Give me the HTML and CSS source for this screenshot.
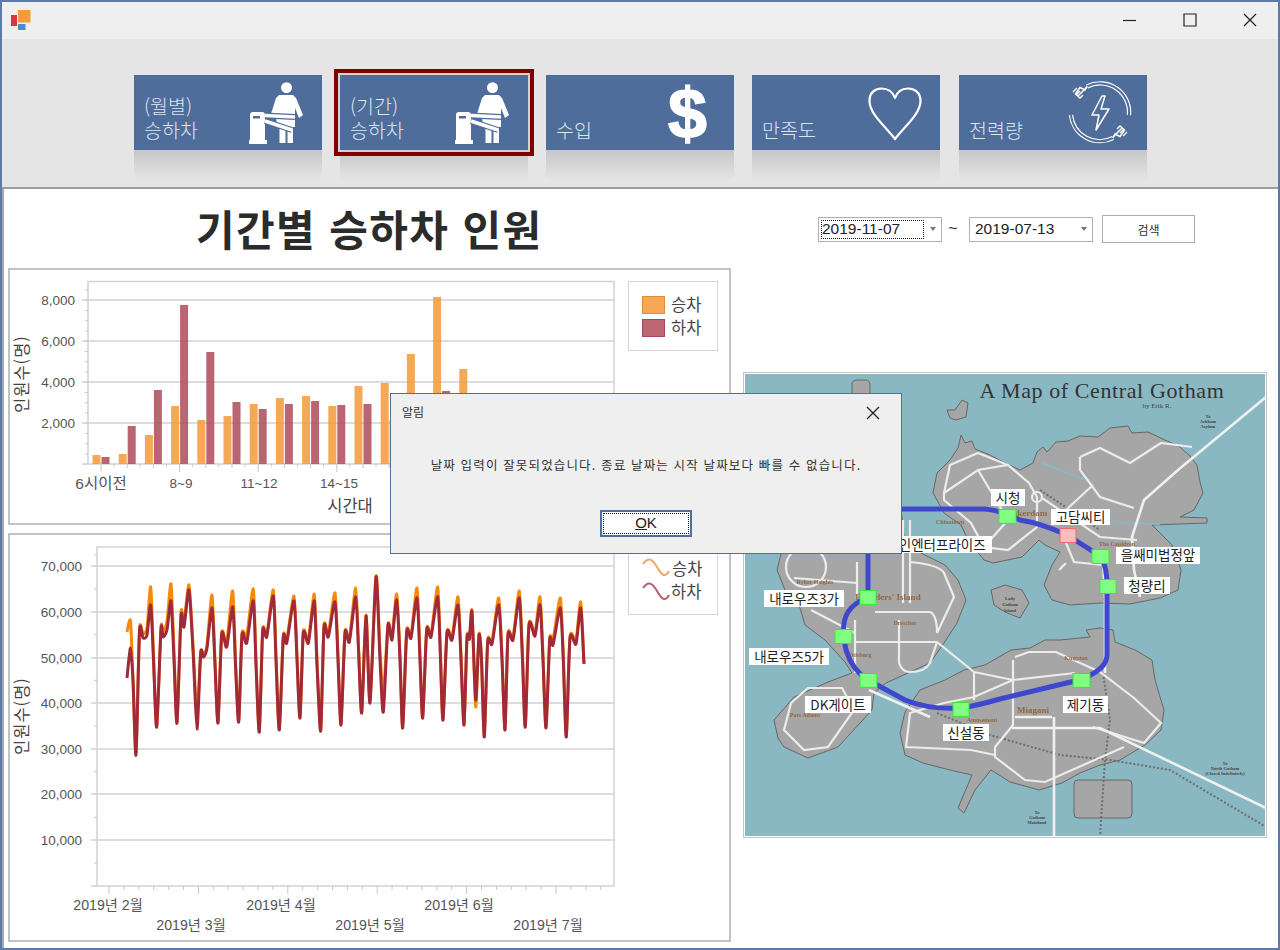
FILE: index.html
```html
<!DOCTYPE html>
<html lang="ko">
<head>
    <meta charset="UTF-8">
    <title>기간별 승하차 인원</title>
    <link rel="stylesheet" href="styles.css">
</head>
<body>
<div class="window">
    <div class="titlebar">
        <svg class="app-logo" viewBox="0 0 24 24">
            <rect x="1" y="7" width="6" height="11" fill="#d8344a"/>
            <rect x="8" y="2" width="12.5" height="12.5" fill="#f59a3e"/>
            <rect x="8" y="16" width="7.5" height="6" fill="#4a8ccb"/>
        </svg>
        <div class="win-controls">
            <svg viewBox="0 0 14 14"><path d="M0 7.5H13"/></svg>
            <svg viewBox="0 0 14 14"><path d="M1 1H13V13H1Z"/></svg>
            <svg viewBox="0 0 14 14"><path d="M1 1L13 13M13 1L1 13"/></svg>
        </div>
    </div>

    <svg class="defs">
        <defs>
            <symbol id="gate" viewBox="0 0 70 66">
                <circle cx="48.5" cy="7.7" r="5.5" fill="#fff"/>
                <path fill="#fff" d="M41 15H55L58 18L65 35L61 38L57 28L57 47H39L38 37H32L38 18Z"/>
                <rect x="41.500" y="46" width="6" height="17" fill="#fff"/>
                <rect x="49.500" y="46" width="5.500" height="17" fill="#fff"/>
                <path fill="#fff" d="M12 35Q12 32 15 32H24Q27 32 27 35V60H29V64H11V60H12Z"/>
                <rect x="15" y="36" width="7" height="2.500" fill="#4e6d9b"/>
                <path d="M27 35.500L57 37" stroke="#4e6d9b" stroke-width="6" fill="none"/>
                <path d="M27 41L54 50" stroke="#4e6d9b" stroke-width="6" fill="none"/>
                <path d="M27 35.500L57 37" stroke="#fff" stroke-width="3.500" fill="none"/>
                <path d="M27 41L54 50" stroke="#fff" stroke-width="3.500" fill="none"/>
            </symbol>
        </defs>
    </svg>

    <div class="ribbon">
        <div class="tile-wrap">
            <div class="tile">
                <span class="tile-label">(월별)<br>승하차</span>
                <svg class="tile-icon"><use href="#gate"/></svg>
            </div>
            <div class="tile-shine"></div>
        </div>
        <div class="tile-wrap">
            <div class="tile active">
                <span class="tile-label">(기간)<br>승하차</span>
                <svg class="tile-icon"><use href="#gate"/></svg>
            </div>
            <div class="tile-shine"></div>
        </div>
        <div class="tile-wrap">
            <div class="tile">
                <span class="tile-label">수입</span>
                <span class="tile-dollar">$</span>
            </div>
            <div class="tile-shine"></div>
        </div>
        <div class="tile-wrap">
            <div class="tile">
                <span class="tile-label">만족도</span>
                <svg class="tile-icon" viewBox="0 0 70 66">
                    <path d="M39 59C30 47 13.500 34 13.500 21C13.500 12 19.500 8.500 25.500 8.500C31.500 8.500 37 12 39 18C41 12 46 8.500 52 8.500C58 8.500 64.500 12 64.500 21C64.500 34 48 47 39 59Z" fill="none" stroke="#fff" stroke-width="2.200" stroke-linejoin="round"/>
                </svg>
            </div>
            <div class="tile-shine"></div>
        </div>
        <div class="tile-wrap last">
            <div class="tile">
                <span class="tile-label">전력량</span>
                <svg class="tile-icon" viewBox="0 0 70 66">
                    <g fill="none">
                        <path d="M24 6.500A29 29 0 0 1 66 35" stroke="#fff" stroke-width="4.400"/>
                        <path d="M24 6.500A29 29 0 0 1 66 35" stroke="#4e6d9b" stroke-width="2"/>
                        <path d="M8 35A29 29 0 0 0 50 58" stroke="#fff" stroke-width="4.400"/>
                        <path d="M8 35A29 29 0 0 0 50 58" stroke="#4e6d9b" stroke-width="2"/>
                        <path d="M39 16L29 35H36L33 50L46 29H38L42 16Z" stroke="#fff" stroke-width="1.500" stroke-linejoin="round"/>
                        <g stroke="#fff" stroke-width="1.500">
                            <path d="M24 6L22 10L17 7.500L12.500 14L17 18L20 15"/>
                            <path d="M24 7L15 16M14 8L10 12M17 11L13 15"/>
                            <path d="M50 58L52 54L57 56.500L61.500 50L57 46L54 49"/>
                            <path d="M50 57L59 48M60 56L64 52M57 53L61 49"/>
                        </g>
                    </g>
                </svg>
            </div>
            <div class="tile-shine"></div>
        </div>
    </div>

    <div class="content">
        <div class="left-col">
            <h1 class="page-title">기간별 승하차 인원</h1>

            <div class="chart-panel bar-panel">
                <svg viewBox="8 268 723 257" class="chart">
                    <g id="bar-grid"></g>
                    <g id="bar-series"></g>
                    <text class="tick-label" text-anchor="end" x="75" y="305">8,000</text>
                    <text class="tick-label" text-anchor="end" x="75" y="346">6,000</text>
                    <text class="tick-label" text-anchor="end" x="75" y="387">4,000</text>
                    <text class="tick-label" text-anchor="end" x="75" y="428">2,000</text>
                    <text class="tick-label wide" text-anchor="middle" x="101" y="489">6시이전</text>
                    <text class="tick-label" text-anchor="middle" x="181" y="488">8~9</text>
                    <text class="tick-label" text-anchor="middle" x="259" y="488">11~12</text>
                    <text class="tick-label" text-anchor="middle" x="339" y="488">14~15</text>
                    <text class="axis-title" text-anchor="middle" x="350" y="512">시간대</text>
                    <text class="axis-title stretched" text-anchor="middle" transform="translate(28 374) rotate(-90)">인원수(명)</text>
                    <rect class="legend-box" x="628.500" y="281.500" width="89" height="69"/>
                    <rect x="642.500" y="296.500" width="22" height="17" fill="#f6a857" stroke="#e08a35"/>
                    <rect x="642.500" y="319.500" width="22" height="17" fill="#bd6570" stroke="#a24a58"/>
                    <text class="axis-title" x="671" y="311">승차</text>
                    <text class="axis-title" x="671" y="334">하차</text>
                </svg>
            </div>

            <div class="chart-panel line-panel">
                <svg viewBox="8 533 723 409" class="chart">
                    <g id="line-grid"></g>
                    <g id="line-series"></g>
                    <text class="tick-label" text-anchor="end" x="82" y="571">70,000</text>
                    <text class="tick-label" text-anchor="end" x="82" y="617">60,000</text>
                    <text class="tick-label" text-anchor="end" x="82" y="663">50,000</text>
                    <text class="tick-label" text-anchor="end" x="82" y="708">40,000</text>
                    <text class="tick-label" text-anchor="end" x="82" y="754">30,000</text>
                    <text class="tick-label" text-anchor="end" x="82" y="799">20,000</text>
                    <text class="tick-label" text-anchor="end" x="82" y="845">10,000</text>
                    <text class="tick-label month" text-anchor="middle" x="108" y="910">2019년 2월</text>
                    <text class="tick-label month" text-anchor="middle" x="191" y="930">2019년 3월</text>
                    <text class="tick-label month" text-anchor="middle" x="281" y="910">2019년 4월</text>
                    <text class="tick-label month" text-anchor="middle" x="370" y="930">2019년 5월</text>
                    <text class="tick-label month" text-anchor="middle" x="459" y="910">2019년 6월</text>
                    <text class="tick-label month" text-anchor="middle" x="548" y="930">2019년 7월</text>
                    <text class="axis-title stretched" text-anchor="middle" transform="translate(28 716) rotate(-90)">인원수(명)</text>
                    <rect class="legend-box" x="628.500" y="548.500" width="89" height="66"/>
                    <path d="M643 564C649 556 653 560 657 567C661 574 665 579 669 571" fill="none" stroke="#eea660" stroke-width="2"/>
                    <path d="M643 588C649 580 653 584 657 591C661 598 665 603 669 595" fill="none" stroke="#b4606c" stroke-width="2"/>
                    <text class="axis-title" x="672" y="575">승차</text>
                    <text class="axis-title" x="671" y="598">하차</text>
                </svg>
            </div>
        </div>

        <div class="right-col">
            <div class="search-bar">
                <div class="date-box"><span class="date-text focused">2019-11-07</span><i class="caret"></i></div>
                <span class="tilde">~</span>
                <div class="date-box"><span class="date-text">2019-07-13</span><i class="caret"></i></div>
                <button class="search-btn">검색</button>
            </div>

            <div class="map-frame">
                <svg class="map" viewBox="745 374 520 462">
                    <defs>
                        <filter id="soft" x="-5%" y="-5%" width="110%" height="110%"><feGaussianBlur stdDeviation="0.45"/></filter>
                    </defs>
                    <rect x="745" y="374" width="520" height="462" fill="#8ab8c2"/>
                    <g filter="url(#soft)">
                        <g class="land">
                            <path d="M961 435L965 443L972 441L975 449L990 455L1003 462L1020 470L1033 463L1037 452L1043 447L1047 452L1056 442L1068 441L1080 436L1098 437L1110 428L1128 426L1132 433L1148 432L1165 440L1180 447L1190 456L1197 465L1200 482L1203 493L1194 510L1180 517L1207 518V523L1152 525L1172 545L1181 570L1178 590L1160 598L1130 604L1100 603L1070 605L1052 600L1044 585L1052 565L1060 552L1045 545L1039 540L1022 557L993 563L984 560L968 540L961 525L944 513L933 493L937 473L950 460L958 448Z"/>
                            <path d="M781 554L777 570L785 590L800 608L805 625L825 640L845 662L852 673L828 682L794 697L774 720L778 738L784 747L808 758L838 747L872 710L874 693L886 683L930 663L944 643L957 623L966 600L958 580L945 565L925 555L905 545L900 500L870 500L790 510Z"/>
                            <path d="M900 733L905 712L920 690L945 680L964 670L985 665L1011 650L1030 648L1045 640L1060 640L1090 637L1086 630L1100 628L1113 630L1115 642L1135 650L1152 660L1155 680L1164 710L1161 730L1145 745L1120 760L1100 765L1080 773L1062 783L1039 790L1010 782L991 770L975 790L964 813L958 808L972 775L950 770L923 763L905 755Z"/>
                            <rect x="1074" y="780" width="58" height="38" rx="4"/>
                            <path d="M991 590L1005 585L1022 590L1029 603L1020 618L1005 612L994 605Z"/>
                            <path d="M947 410L955 410L962 400L968 403L966 417L956 420L950 418Z"/>
                            <path d="M852 384Q852 380 858 380H866Q870 380 870 386V420H852Z"/>
                        </g>
                        <g class="water-line">
                            <path d="M1042 463L1093 483"/>
                            <path d="M1110 522L1160 524"/>
                        </g>
                        <g class="rail">
                            <path d="M937 713L990 735L1060 755L1110 760L1170 770L1266 827"/>
                            <path d="M1103 673L1110 720L1105 760L1100 836"/>
                            <path d="M1040 490L1100 530"/>
                        </g>
                        <g class="road">
                            <path d="M808 688H842L854 710L828 747L804 750L784 730L791 703Z"/>
                            <circle cx="806" cy="567" r="20"/>
                            <path d="M794 578L857 583M857 562V603M903 520V603M910 520V603M899 620V663Q902 672 910 672Q925 672 930 663L937 642M855 642H937M875 612H930Q937 615 937 633M937 642L974 672M855 620V673M811 610L855 633M910 562Q940 565 944 573L954 597L937 633"/>
                            <path d="M944 493L978 470L1008 465L1029 483L1037 497V527L1008 550L984 547L971 523L944 500ZM944 493L950 465L978 453L1008 465M978 470L1008 520L984 547"/>
                            <circle cx="1037" cy="497" r="5"/>
                            <path d="M1080 457L1100 448L1130 463L1161 443L1192 447M1080 457V470L1100 497L1134 508"/>
                            <path class="bridge" d="M1266 397L1178 470L1144 500L1132 537L1134 570L1140 597"/>
                            <path d="M1042 498L1100 537L1137 540M1066 510L1093 485M1066 543L1074 562L1103 565L1105 600M1059 570L1066 563"/>
                            <path d="M1015 657L1029 652H1056L1100 672L1134 698L1161 723L1144 743L1093 727M1013 660V725L995 747V757L1025 780L1045 782L1124 747M910 713L906 747L971 750L995 755M906 747L910 713L944 703M974 672V700M974 672L1013 680L1075 673M944 703L974 697L1013 680"/>
                            <path class="bridge" d="M869 690L930 717M1270 810L1100 728H1012M1054 717V836M1015 717H1052M1105 600V673"/>
                        </g>
                        <g class="place">
                            <text x="950" y="524">Chinatown</text>
                            <text x="815" y="584">Ryker Heights</text>
                            <text x="888" y="600" class="big">Founders' Island</text>
                            <text x="905" y="625">Drescher</text>
                            <text x="860" y="657">Otisburg</text>
                            <text x="805" y="717">Port Adams</text>
                            <text x="1076" y="660">Kingston</text>
                            <text x="1033" y="713" class="big">Miagani</text>
                            <text x="982" y="722">Amusement</text>
                            <text x="1117" y="546">The Cauldron</text>
                            <text x="1027" y="516" class="big">Bakerdam</text>
                        </g>
                    </g>
                    <g class="map-small">
                        <text x="1157" y="408">by Erik R.</text>
                        <text class="tiny" x="1208" y="418">To</text>
                        <text class="tiny" x="1208" y="423">Arkham</text>
                        <text class="tiny" x="1208" y="428">Asylum</text>
                        <text class="tiny" x="1225" y="765">To</text>
                        <text class="tiny" x="1225" y="770">North Gotham</text>
                        <text class="tiny" x="1225" y="775">(Closed Indefinitely)</text>
                        <text class="tiny" x="1037" y="814">To</text>
                        <text class="tiny" x="1037" y="819">Gotham</text>
                        <text class="tiny" x="1037" y="824">Mainland</text>
                        <text class="tiny" x="1010" y="600">Lady</text>
                        <text class="tiny" x="1010" y="606">Gotham</text>
                        <text class="tiny" x="1010" y="612">Island</text>
                    </g>
                    <text class="map-title" x="1102" y="398">A Map of Central Gotham</text>

                    <path class="metro" d="M868 597V530Q868 509 890 509H985Q1000 510 1020 520Q1040 523 1067 535L1100 556Q1107 565 1107 586V655Q1107 670 1079 680L1000 699Q975 706 961 708Q930 710 905 700L868 680Q852 670 846 650Q840 625 848 612Q855 602 868 597"/>

                    <g class="station">
                        <rect x="999" y="509.500" width="17" height="14"/>
                        <rect x="1092" y="549.500" width="17" height="14"/>
                        <rect x="1100" y="579.500" width="16" height="14"/>
                        <rect x="860" y="590.500" width="16" height="14"/>
                        <rect x="835" y="629.500" width="17" height="14"/>
                        <rect x="860" y="673.500" width="17" height="14"/>
                        <rect x="953" y="702.500" width="16" height="14"/>
                        <rect x="1073" y="673.500" width="17" height="14"/>
                    </g>
                    <rect class="station-now" x="1060" y="528.500" width="16" height="14"/>

                    <g class="stop-label">
                        <rect x="991" y="489" width="34" height="17"/><text x="1008" y="503">시청</text>
                        <rect x="1051" y="509" width="59" height="16"/><text x="1080.500" y="522">고담씨티</text>
                        <rect x="880" y="536" width="112" height="17"/><text x="936" y="550">웨인엔터프라이즈</text>
                        <rect x="1116" y="547" width="84" height="17"/><text x="1158" y="560">을쌔미법정앞</text>
                        <rect x="1124" y="577" width="46" height="17"/><text x="1147" y="591">청량리</text>
                        <rect x="764" y="590" width="80" height="17"/><text x="804" y="604">내로우즈3가</text>
                        <rect x="749" y="648" width="80" height="17"/><text x="789" y="662">내로우즈5가</text>
                        <rect x="805" y="696" width="66" height="17"/><text x="838" y="710">DK게이트</text>
                        <rect x="1063" y="696" width="45" height="17"/><text x="1085.500" y="710">제기동</text>
                        <rect x="943" y="724" width="46" height="17"/><text x="966" y="738">신설동</text>
                    </g>
                </svg>
            </div>
        </div>
    </div>

    <div class="dialog">
        <div class="dialog-head">
            <span>알림</span>
            <svg viewBox="0 0 14 14"><path d="M1 1L13 13M13 1L1 13"/></svg>
        </div>
        <p class="dialog-msg">날짜 입력이 잘못되었습니다. 종료 날짜는 시작 날짜보다 빠를 수 없습니다.</p>
        <button class="dialog-ok"><span><u>O</u>K</span></button>
    </div>
</div>
<script src="chart.js"></script>
</body>
</html>
```

FILE: styles.css
```css
* {
    box-sizing: border-box;
}
body {
    margin: 0;
    font-family: "Noto Sans CJK KR", "Liberation Sans", sans-serif;
    color: #333;
    background-color: #fff;
}
.window {
    position: relative;
    width: 1280px;
    height: 950px;
    border: 2px solid #5d7ba8;
    overflow: hidden;
    background-color: #fff;
}
.defs {
    position: absolute;
    width: 0;
    height: 0;
}

/* title bar */
.titlebar {
    height: 37px;
    display: flex;
    justify-content: space-between;
    align-items: center;
    background-color: #efefef;
}
.app-logo {
    width: 24px;
    height: 24px;
    margin-left: 8px;
    margin-top: -2px;
}
.win-controls {
    display: flex;
    gap: 46px;
    margin-right: 21px;
    margin-top: -1px;
}
.win-controls svg {
    width: 14px;
    height: 14px;
    fill: none;
    stroke: #222;
    stroke-width: 1.2;
}

/* ribbon */
.ribbon {
    height: 150px;
    padding: 36px 0 0 132px;
    display: flex;
    gap: 18px;
    background-color: #e5e5e5;
    border-bottom: 2px solid #9c9c9c;
}
.tile-wrap {
    width: 188px;
}
.tile-wrap.last {
    margin-left: 1px;
}
.tile {
    position: relative;
    z-index: 1;
    height: 75px;
    display: flex;
    justify-content: space-between;
    background-color: #4e6d9b;
    color: #dde5ef;
}
.tile.active {
    box-shadow: 0 0 0 2px #d2d2d2, 0 0 0 6px #800000;
}
.tile-shine {
    height: 30px;
    background: linear-gradient(#c6c6c6, #e5e5e5);
}
.tile-label {
    align-self: flex-end;
    padding: 0 0 8px 10px;
    font-size: 19.5px;
    font-weight: 300;
    line-height: 24px;
}
.tile-icon {
    width: 70px;
    height: 66px;
    margin: 5px 14px 0 0;
}
.tile-dollar {
    margin-right: 27px;
    font-family: "Liberation Sans", sans-serif;
    font-weight: 700;
    font-size: 70px;
    line-height: 79px;
    color: #fff;
    -webkit-text-stroke: 1.5px #fff;
}

/* main area */
.content {
    height: 759px;
    padding-left: 4px;
    display: flex;
    gap: 12px;
    border-left: 2px solid #a8a8a8;
}
.left-col {
    width: 723px;
}
.page-title {
    height: 79px;
    margin: 0;
    padding-left: 188px;
    font-size: 42px;
    line-height: 78px;
    font-weight: 700;
    letter-spacing: 1.4px;
    color: #2b2b2b;
}
.chart-panel {
    border: 2px solid #c2c2c2;
    overflow: hidden;
}
.bar-panel {
    height: 257px;
    margin-bottom: 8px;
}
.line-panel {
    height: 409px;
}
.chart {
    display: block;
    width: 723px;
    margin: -2px;
}
.bar-panel .chart {
    height: 257px;
}
.line-panel .chart {
    height: 409px;
}
.tick-label {
    font-family: "Liberation Sans", "Noto Sans CJK KR", sans-serif;
    font-size: 13.5px;
    fill: #555;
}
.tick-label.wide {
    font-size: 15.5px;
}
.tick-label.month {
    font-size: 14.2px;
}
.axis-title {
    font-size: 16.5px;
    fill: #444;
}
.axis-title.stretched {
    letter-spacing: 1px;
}
.legend-box {
    fill: #fff;
    stroke: #d6d6d6;
}
.grid-line {
    stroke: #d2d2d2;
    stroke-width: 1.5;
}
.tick-line {
    stroke: #c8c8c8;
    stroke-width: 1;
}
.bar-up {
    fill: #f39a3a;
    fill-opacity: 0.85;
}
.bar-down {
    fill: #ae4a58;
    fill-opacity: 0.85;
}
.line-up {
    fill: none;
    stroke: #f58a0a;
    stroke-width: 3;
    stroke-linejoin: round;
}
.line-down {
    fill: none;
    stroke: #a22a38;
    stroke-width: 3;
    stroke-linejoin: round;
}

/* date search */
.search-bar {
    height: 28px;
    margin-top: 26px;
    padding-left: 75px;
    display: flex;
    align-items: center;
}
.date-box {
    width: 124px;
    height: 25px;
    padding: 2px;
    display: flex;
    align-items: center;
    border: 1px solid #b0b0b0;
    background-color: #fff;
}
.date-text {
    width: 103px;
    height: 19px;
    padding-left: 1px;
    font-family: "Liberation Sans", sans-serif;
    font-size: 15.5px;
    line-height: 18px;
    color: #222;
}
.date-box:nth-child(3) .date-text {
    padding-left: 3px;
}
.date-text.focused {
    outline: 1px dotted #222;
    outline-offset: -1px;
}
.caret {
    margin-left: 6px;
    border-top: 4px solid #777;
    border-left: 3.500px solid transparent;
    border-right: 3.500px solid transparent;
}
.tilde {
    width: 22px;
    margin-right: 5px;
    text-align: center;
    font-family: "Liberation Sans", sans-serif;
    font-size: 16px;
    color: #333;
}
.search-btn {
    width: 93px;
    height: 28px;
    margin-left: 9px;
    padding: 0;
    border: 1px solid #adadad;
    background-color: #fff;
    font-family: "Noto Sans CJK KR", sans-serif;
    font-size: 12px;
    color: #333;
}

/* map */
.map-frame {
    width: 524px;
    height: 466px;
    margin-top: 129px;
    padding: 1px;
    border: 1px solid #c4c4c4;
    background-color: #fff;
}
.map {
    display: block;
    width: 520px;
    height: 462px;
}
.land path,
.land rect {
    fill: #a6a6a6;
    stroke: #666;
    stroke-width: 1;
}
.water-line path {
    fill: none;
    stroke: #8ab8c2;
    stroke-width: 2;
}
.road path,
.road circle {
    fill: none;
    stroke: #ececec;
    stroke-width: 2.2;
}
.road .bridge {
    stroke-width: 2.6;
    stroke: #f0f0f0;
}
.rail path {
    fill: none;
    stroke: #6d6d6d;
    stroke-width: 2;
    stroke-dasharray: 2 2;
}
.place text {
    font-family: "Liberation Serif", serif;
    font-size: 6px;
    font-weight: 700;
    fill: #94663f;
    text-anchor: middle;
}
.place .big {
    font-size: 9px;
}
.map-title {
    font-family: "Liberation Serif", serif;
    font-size: 22px;
    letter-spacing: 0.6px;
    fill: #333;
    text-anchor: middle;
}
.map-small text {
    font-family: "Liberation Serif", serif;
    font-size: 7px;
    fill: #444;
    text-anchor: middle;
}
.map-small .tiny {
    font-size: 4.5px;
    font-weight: 700;
}
.metro {
    fill: none;
    stroke: #3f48cc;
    stroke-width: 5;
}
.station rect {
    fill: #80ff80;
    stroke: #38e838;
}
.station-now {
    fill: #ffbcbc;
    stroke: #ee6a6a;
}
.stop-label rect {
    fill: #fff;
}
.stop-label text {
    font-size: 13.5px;
    fill: #222;
    text-anchor: middle;
}

/* message box */
.dialog {
    position: absolute;
    left: 388px;
    top: 391px;
    width: 512px;
    height: 161px;
    border: 1px solid #4f6f9f;
    background-color: #efefef;
}
.dialog-head {
    height: 38px;
    padding: 10px 21px 0 11px;
    display: flex;
    justify-content: space-between;
    font-size: 12px;
    line-height: 16px;
}
.dialog-head svg {
    width: 14px;
    height: 14px;
    margin-top: 2px;
    fill: none;
    stroke: #222;
    stroke-width: 1.3;
}
.dialog-msg {
    margin: 0;
    height: 78px;
    padding-top: 25px;
    text-align: center;
    font-size: 12.5px;
    letter-spacing: 1.15px;
    line-height: 16px;
    color: #333;
}
.dialog-ok {
    display: block;
    width: 92px;
    height: 27px;
    margin: 0 auto;
    padding: 2px;
    border: 2px solid #4f6f9f;
    background-color: #fff;
    font-family: "Liberation Sans", sans-serif;
    font-size: 15px;
    color: #222;
}
.dialog-ok span {
    display: block;
    height: 19px;
    line-height: 18px;
    outline: 1px dotted #222;
}
```

FILE: chart.js
```js
const NS = 'http://www.w3.org/2000/svg';

function add(parent, tag, attrs) {
    const el = document.createElementNS(NS, tag);
    Object.keys(attrs).forEach(k => el.setAttribute(k, attrs[k]));
    parent.appendChild(el);
    return el;
}

// Bar chart. Tops are pixel rows read off the axis (464 = 0, 20.5px per 1,000)
const barGroups = [
    [455, 457], [454, 426], [435, 390], [406, 305], [420, 352],
    [416, 402], [404, 409], [398, 404], [396, 401], [406, 405],
    [386, 404], [383, 420], [354, 420], [297, 391], [369, 420]
];

const barGrid = document.getElementById('bar-grid');
[300, 341, 382, 423].forEach(y => {
    add(barGrid, 'line', { class: 'grid-line', x1: 82, x2: 614, y1: y, y2: y });
});
add(barGrid, 'path', { class: 'grid-line', fill: 'none', d: 'M88 464V281.500H614V464H82' });
for (let y = 290; y < 464; y += 10.25) {
    add(barGrid, 'line', { class: 'tick-line', x1: 85, x2: 88, y1: y, y2: y });
}
barGroups.forEach((g, i) => {
    const major = i % 3 === 0;
    const cx = 101 + i * 26.2;
    add(barGrid, 'line', { class: 'tick-line', x1: cx, x2: cx, y1: 464, y2: major ? 472 : 468 });
    add(barGrid, 'line', { class: 'tick-line', x1: cx + 13, x2: cx + 13, y1: 464, y2: 467 });
});

const barSeries = document.getElementById('bar-series');
barGroups.forEach((g, i) => {
    const x = 92.5 + i * 26.2;
    add(barSeries, 'rect', { class: 'bar-up', x: x, y: g[0], width: 8, height: 464 - g[0] });
    add(barSeries, 'rect', { class: 'bar-down', x: x + 9, y: g[1], width: 8, height: 464 - g[1] });
});

// Line chart. Each point is [x, red y, orange y], orange defaults to just above red
const linePoints = [
    [127, 678, 632], [130.500, 648, 621], [133, 680, 680], [136, 755, 752], [139.500, 631, 630],
    [143, 638, 634], [147, 635, 628], [150.700, 605, 587], [153.500, 660, 655], [156.700, 727],
    [161, 629, 628], [163, 637, 632], [167, 630, 621], [171, 601, 584], [174, 660, 650], [177, 723],
    [181, 616, 613], [184, 627, 622], [189, 590, 585], [193, 650, 645], [197, 729, 715],
    [200.700, 653], [203.500, 657, 655], [207, 648, 645], [212, 608, 595], [215, 665, 660], [218, 723],
    [221.700, 634], [226.700, 647, 642], [232.700, 607, 591], [235.500, 665, 660], [238.700, 722],
    [242, 635], [246.700, 643, 636], [253.300, 601, 589], [256, 665, 660], [259.300, 732],
    [262.700, 631], [266.700, 637, 635], [273.300, 596, 590], [276, 660, 655], [279.300, 730],
    [283.300, 637], [286.700, 643, 640], [294, 601, 596], [297, 660, 655], [300, 718],
    [303.300, 633], [308.300, 643, 640], [314.300, 601, 594], [317, 665, 660], [320.700, 731],
    [324, 627], [328.300, 637, 634], [335, 602, 593], [338, 660, 655], [341, 725],
    [345, 633], [349.300, 642, 639], [355.700, 597, 588], [358.500, 650, 645], [361.700, 713],
    [366, 616], [370, 703, 700], [376, 577, 576], [380, 660, 650], [383.300, 712, 695],
    [388, 625, 624], [392, 640, 637], [396.700, 600, 594], [400, 660, 655], [402.700, 728],
    [406.700, 632], [411, 638, 636], [417, 598, 588], [420, 660, 655], [422.700, 718],
    [426.700, 630], [431, 637, 635], [437.700, 597, 587], [440.500, 660, 655], [443, 720],
    [447, 633], [452, 640, 637], [458, 605, 597], [461, 660, 655], [464, 725],
    [467, 638], [469.500, 639, 637], [472, 612, 611], [475.700, 700, 707], [479, 635, 634],
    [481.500, 660], [484.300, 737], [487.700, 642], [492, 644, 642], [498.700, 605, 598],
    [502, 660, 655], [505, 730], [508, 635], [513, 640, 637], [519.300, 598, 591], [522.500, 660, 655],
    [525.300, 727], [529, 625], [535, 636, 633], [540, 605, 597], [543, 660, 655], [546, 728],
    [549.700, 640], [553, 645, 640], [560.300, 608, 598], [563.300, 660, 655], [566.300, 737],
    [570, 638], [576, 644, 640], [580.700, 608, 602], [584, 664]
];

// Catmull-Rom through the points, eased so the spikes don't overshoot
function smoothPath(pts) {
    let d = 'M' + pts[0][0] + ' ' + pts[0][1];
    for (let i = 0; i < pts.length - 1; i++) {
        const p0 = pts[Math.max(i - 1, 0)];
        const p1 = pts[i];
        const p2 = pts[i + 1];
        const p3 = pts[Math.min(i + 2, pts.length - 1)];
        const k = 0.12;
        const c1x = p1[0] + (p2[0] - p0[0]) * k;
        const c1y = p1[1] + (p2[1] - p0[1]) * k;
        const c2x = p2[0] - (p3[0] - p1[0]) * k;
        const c2y = p2[1] - (p3[1] - p1[1]) * k;
        d += 'C' + c1x.toFixed(1) + ' ' + c1y.toFixed(1) + ' ' + c2x.toFixed(1) + ' ' + c2y.toFixed(1) + ' ' + p2[0] + ' ' + p2[1];
    }
    return d;
}

const lineGrid = document.getElementById('line-grid');
[566, 612, 658, 703, 749, 794, 840].forEach(y => {
    add(lineGrid, 'line', { class: 'grid-line', x1: 91, x2: 614, y1: y, y2: y });
});
add(lineGrid, 'path', { class: 'grid-line', fill: 'none', d: 'M97 886V547H614V886H91' });
for (let y = 589; y < 886; y += 45.67) {
    add(lineGrid, 'line', { class: 'tick-line', x1: 94, x2: 97, y1: y, y2: y });
}
add(lineGrid, 'line', { class: 'tick-line', x1: 94, x2: 97, y1: 555, y2: 555 });
for (let i = 0; i < 34; i++) {
    const x = 109 + i * 14.9;
    add(lineGrid, 'line', { class: 'tick-line', x1: x, x2: x, y1: 886, y2: i % 6 === 0 ? 894 : 890 });
}

const lineSeries = document.getElementById('line-series');
const upPts = linePoints.map(p => [p[0], p.length > 2 ? p[2] : p[1] - 1]);
const downPts = linePoints.map(p => [p[0], p[1]]);
add(lineSeries, 'path', { class: 'line-up', d: smoothPath(upPts) });
add(lineSeries, 'path', { class: 'line-down', d: smoothPath(downPts) });
```
